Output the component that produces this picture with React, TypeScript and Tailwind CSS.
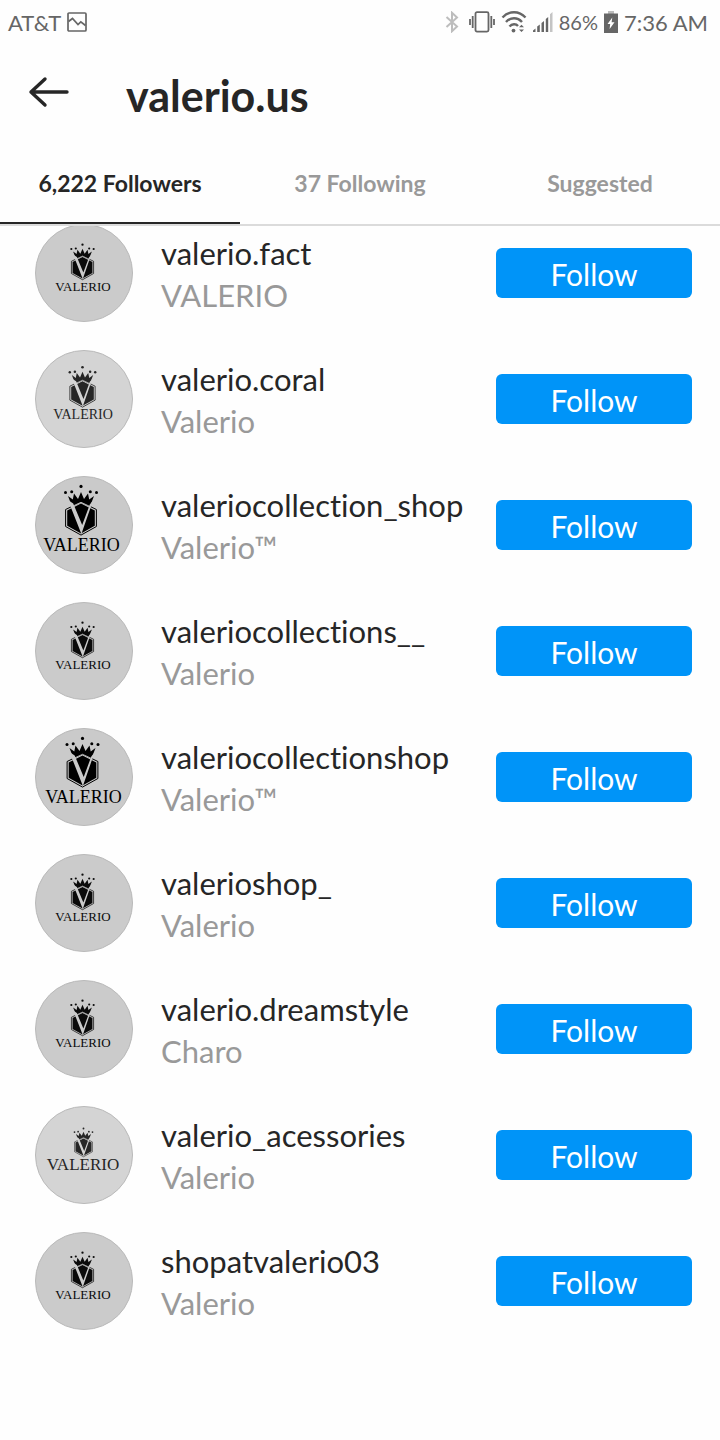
import { useState } from 'react'

interface LogoStyle {
  bg: string
  ink: string
  x: number
  y: number
  scale: number
  textX: number
  baseline: number
  fontSize: number
}

interface Follower {
  username: string
  name: string
  logo: LogoStyle
}

const small: LogoStyle = { bg: '#cbcbcb', ink: '#0a0a0a', x: 47.5, y: 20, scale: 0.72, textX: 48, baseline: 67, fontSize: 13 }
const large: LogoStyle = { bg: '#cacaca', ink: '#000000', x: 46, y: 9.5, scale: 1, textX: 46.5, baseline: 75, fontSize: 18 }

const followers: Follower[] = [
  { username: 'valerio.fact', name: 'VALERIO', logo: small },
  { username: 'valerio.coral', name: 'Valerio', logo: { ...small, bg: '#d4d4d4', ink: '#262626', y: 16.5, scale: 0.82, baseline: 69, fontSize: 14 } },
  { username: 'valeriocollection_shop', name: 'Valerio™', logo: large },
  { username: 'valeriocollections__', name: 'Valerio', logo: small },
  { username: 'valeriocollectionshop', name: 'Valerio™', logo: { ...large, x: 47.5, textX: 48.5 } },
  { username: 'valerioshop_', name: 'Valerio', logo: small },
  { username: 'valerio.dreamstyle', name: 'Charo', logo: small },
  { username: 'valerio_acessories', name: 'Valerio', logo: { ...small, bg: '#d4d4d4', ink: '#262626', x: 48.5, y: 22, scale: 0.58, baseline: 64, fontSize: 17 } },
  { username: 'shopatvalerio03', name: 'Valerio', logo: small },
]

const tabs = ['6,222 Followers', '37 Following', 'Suggested']

function Avatar({ logo }: { logo: LogoStyle }) {
  return (
    <svg viewBox="0 0 98 98" className="size-[98px] shrink-0" aria-hidden="true">
      <circle cx="49" cy="49" r="48.5" fill={logo.bg} stroke="#b9b9b9" />
      <g transform={`translate(${logo.x} ${logo.y}) scale(${logo.scale})`} fill={logo.ink}>
        <circle cx="0" cy="0.9" r="1.6" />
        <circle cx="-9.3" cy="6.3" r="1.5" />
        <circle cx="9.3" cy="6.3" r="1.5" />
        <circle cx="-15.5" cy="7" r="1.5" />
        <circle cx="15.5" cy="7" r="1.5" />
        {/* hexagon */}
        <path d="M0 16.5 L15.4 24 V41 L0 49.6 L-15.4 41 V24 Z" fill="none" stroke={logo.ink} strokeWidth="1" />
        <path d="M0 18 L13.8 25 V40.2 L0 48 L-13.8 40.2 V25 Z" />
        {/* crown */}
        <path d="M-13 10.5 L-8.2 14 L-7 8 L-3 13.5 L0 6.5 L3 13.5 L7 8 L8.2 14 L13 10.5 L9 21 L0 16.8 L-9 21 Z" />
        <path d="M-9 21 L0 16.8 L9 21" fill="none" stroke={logo.bg} strokeWidth="0.9" />
        <path d="M-13 14.5 L-7.8 18 L1.2 39.5 L8.8 19 L12 15 L0.4 48.5 Z" fill={logo.bg} />
      </g>
      <text
        x={logo.textX}
        y={logo.baseline}
        textAnchor="middle"
        fill={logo.ink}
        fontSize={logo.fontSize}
        fontFamily="'Liberation Serif', serif"
      >
        VALERIO
      </text>
    </svg>
  )
}

function StatusBar() {
  return (
    <div className="flex h-11 items-center justify-between px-2 pr-3 text-[#666666]">
      <div className="flex items-center gap-1.5">
        <span className="text-[22px]">AT&amp;T</span>
        <svg viewBox="0 0 20 20" className="size-5" fill="none" stroke="currentColor" strokeWidth="1.7">
          <rect x="1" y="1" width="18" height="18" rx="1" />
          <path d="M1.5 9.5 L5.5 6.5 L11 12.5 L13.8 9.8 L18.5 13.5" />
        </svg>
      </div>
      <div className="flex items-center gap-1.5">
        <svg viewBox="0 0 14 22" className="mr-1 h-[22px] w-[14px] text-[#bdbdbd]" fill="none" stroke="currentColor" strokeWidth="2">
          <path d="M1.5 6 L12 15.5 L7 20.2 V1.8 L12 6.5 L1.5 16" />
        </svg>
        <svg viewBox="0 0 26 22" className="h-[22px] w-[26px]" fill="none" stroke="currentColor" strokeWidth="1.8">
          <rect x="6.5" y="1.2" width="13" height="19.4" rx="1.5" />
          <path d="M3.7 5 V17 M1 8 V14 M22.3 5 V17 M25 8 V14" />
        </svg>
        <svg viewBox="0 0 26 22" className="h-[22px] w-[26px]" fill="none" stroke="currentColor" strokeWidth="2.4">
          <path d="M1.5 6.5 C8 -0.5 18 -0.5 24.5 6.5" />
          <path d="M5 11 C9.5 6 16.5 6 21 11" />
          <path d="M8.5 15.5 C11 12.6 15 12.6 17 15" />
          <circle cx="12.5" cy="19.6" r="1.9" fill="currentColor" stroke="none" />
          <path d="M18 16.2 L20.5 13.7 L23 16.2 Z M18 18.6 L20.5 21 L23 18.6 Z" fill="currentColor" stroke="none" />
        </svg>
        <svg viewBox="0 0 20 20" className="size-5" fill="currentColor">
          <path d="M0 20 V18.5 L2.5 16.5 V20 Z M4.2 20 V14.5 L6.8 12.5 V20 Z M8.5 20 V11 L11 9 V20 Z M12.8 20 V7 L15.2 5 V20 Z" />
          <path d="M17 20 V2.2 L19.5 0 V20 Z" fill="#c4c4c4" />
        </svg>
        <span className="text-xl">86%</span>
        <svg viewBox="0 0 14 22" className="h-[22px] w-[14px]" fill="currentColor">
          <path d="M4 0 H10 V3 H4 Z" fill="#bdbdbd" />
          <path d="M0 2.5 H14 V22 H0 Z" />
          <path d="M8.3 6.5 L3.5 13 H6.2 L5.6 18 L10.5 11.3 H7.6 Z" fill="#ffffff" />
        </svg>
        <span className="text-[22px]">7:36 AM</span>
      </div>
    </div>
  )
}

export default function App() {
  const [active, setActive] = useState(0)

  return (
    <div className="min-h-screen bg-[#fefefe] font-['Lato','Open_Sans',sans-serif] text-[#262626] [font-variant-ligatures:none]">
      <StatusBar />
      <header className="flex h-[100px] items-center gap-14 px-7">
        <button aria-label="Back" className="-mt-1">
          <svg viewBox="0 0 42 32" className="h-8 w-[42px]" fill="none" stroke="currentColor" strokeWidth="3.4" strokeLinecap="round" strokeLinejoin="round">
            <path d="M39 16 H3 M17 3 L3 16 L17 29" />
          </svg>
        </button>
        <h1 className="pt-1 text-[43px] font-bold">valerio.us</h1>
      </header>
      <nav className="relative z-10 grid h-[82px] grid-cols-3 border-b-2 border-[#dbdbdb]">
        {tabs.map((tab, i) => (
          <button
            key={tab}
            onClick={() => setActive(i)}
            className={`border-b-2 text-[23px] font-bold ${
              i === active ? 'border-[#262626] text-[#262626]' : 'border-transparent text-[#999999]'
            }`}
          >
            {tab}
          </button>
        ))}
      </nav>
      <ul className="-mt-0.5 flex flex-col gap-7 pr-7 pl-[35px]">
        {followers.map(f => (
          <li key={f.username} className="flex items-center gap-7">
            <Avatar logo={f.logo} />
            <div className="min-w-0 flex-1 pt-0.5 text-[31px] leading-[42px]">
              <div className="whitespace-nowrap">{f.username}</div>
              <div className="text-[#999999]">{f.name}</div>
            </div>
            <button className="h-[50px] w-[196px] shrink-0 rounded-md bg-[#0094f8] pt-0.5 text-[30px] text-white">
              Follow
            </button>
          </li>
        ))}
      </ul>
    </div>
  )
}
